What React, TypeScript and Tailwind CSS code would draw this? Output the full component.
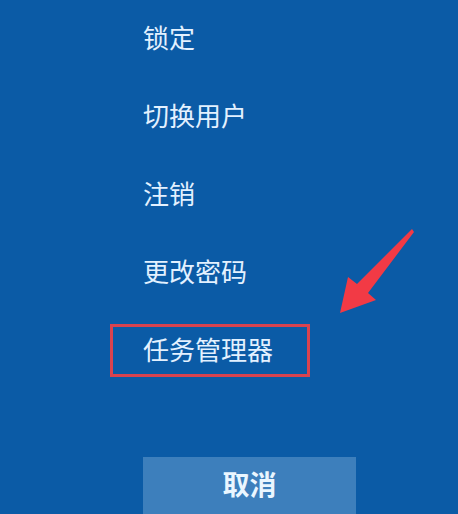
const items = ['锁定', '切换用户', '注销', '更改密码', '任务管理器'];

export default function App() {
  return (
    <div
      className="relative h-[514px] w-[458px] overflow-hidden bg-[#0b5ba6] text-[#e3f1ff]"
      style={{ fontFamily: '"Liberation Sans", "Noto Sans CJK SC", sans-serif' }}
    >
      <div className="flex flex-col gap-[25px] pt-[12px]">
        {items.map((label, i) => (
          <div
            key={label}
            className={
              i === items.length - 1
                ? 'ml-[110px] flex h-[53px] w-[200px] items-center border-[3px] border-[#d9434f] pl-[30px] text-[26px] leading-none'
                : 'ml-[110px] flex h-[53px] w-[200px] items-center border-[3px] border-transparent pl-[30px] text-[26px] leading-none'
            }
          >
            {label}
          </div>
        ))}
      </div>

      <div className="ml-[143px] mt-[80px] flex h-[64px] w-[213px] items-start justify-center bg-[#3d7fbc] pt-[16px] text-[27px] font-semibold leading-none text-[#eaf6ff]">
        取消
      </div>

      {/* annotation arrow */}
      <svg className="absolute left-[330px] top-[225px]" width="90" height="95" viewBox="0 0 90 95">
        <path d="M82 4 L84 7 L38 68 L46 75 L10 88 L18 52 L27 59 Z" fill="#f23a45" />
      </svg>
    </div>
  );
}
